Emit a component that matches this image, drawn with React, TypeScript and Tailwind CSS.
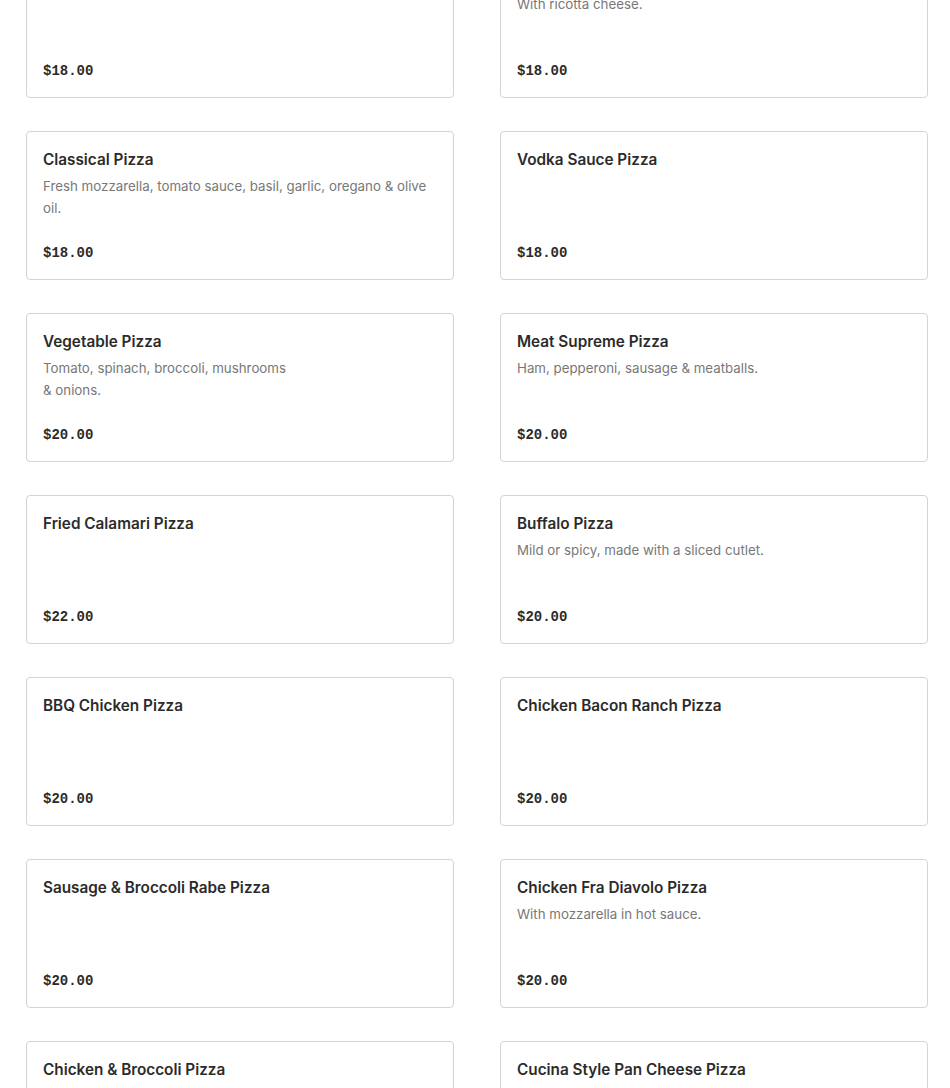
type MenuItem = {
  name: string;
  description?: string[];
  price: string;
};

// First row is scrolled partly out of view in the reference.
const ITEMS: MenuItem[] = [
  { name: "Margherita Pizza", price: "$18.00" },
  { name: "White Pizza", description: ["With ricotta cheese."], price: "$18.00" },
  {
    name: "Classical Pizza",
    description: ["Fresh mozzarella, tomato sauce, basil, garlic, oregano & olive oil."],
    price: "$18.00",
  },
  { name: "Vodka Sauce Pizza", price: "$18.00" },
  {
    name: "Vegetable Pizza",
    description: ["Tomato, spinach, broccoli, mushrooms", "& onions."],
    price: "$20.00",
  },
  { name: "Meat Supreme Pizza", description: ["Ham, pepperoni, sausage & meatballs."], price: "$20.00" },
  { name: "Fried Calamari Pizza", price: "$22.00" },
  { name: "Buffalo Pizza", description: ["Mild or spicy, made with a sliced cutlet."], price: "$20.00" },
  { name: "BBQ Chicken Pizza", price: "$20.00" },
  { name: "Chicken Bacon Ranch Pizza", price: "$20.00" },
  { name: "Sausage & Broccoli Rabe Pizza", price: "$20.00" },
  { name: "Chicken Fra Diavolo Pizza", description: ["With mozzarella in hot sauce."], price: "$20.00" },
  { name: "Chicken & Broccoli Pizza", price: "$20.00" },
  { name: "Cucina Style Pan Cheese Pizza", price: "$20.00" },
];

function MenuCard({ item }: { item: MenuItem }) {
  return (
    <div className="flex h-[149px] flex-col rounded-[4px] border border-[#d4d4d4] bg-white px-4 pb-[15px] pt-[17px]">
      <p className="text-[15.3px] font-semibold leading-[22px] text-[#2b2b2b]">{item.name}</p>
      {item.description && (
        <p className="mt-[4px] text-[13.3px] leading-[22px] text-[#787878]">
          {item.description.map((line, i) => (
            <span key={i} className="block">
              {line}
            </span>
          ))}
        </p>
      )}
      <p className="mt-auto font-['Liberation_Mono',monospace] text-[14px] font-bold leading-[22px] text-[#2b2b2b]">
        {item.price}
      </p>
    </div>
  );
}

export default function App() {
  return (
    <div className="h-[1088px] overflow-hidden bg-white font-['Inter',sans-serif]">
      <div className="-mt-[51px] grid grid-cols-[428px_428px] gap-x-[46px] gap-y-[33px] pl-[26px]">
        {ITEMS.map((item) => (
          <MenuCard key={item.name} item={item} />
        ))}
      </div>
    </div>
  );
}
